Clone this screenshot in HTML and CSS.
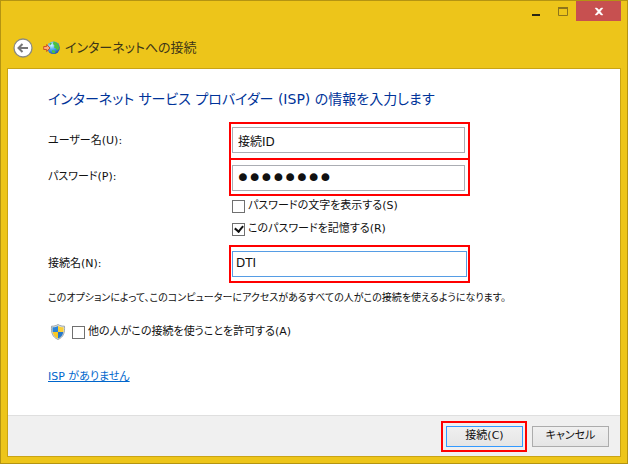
FILE: index.html
```html
<!DOCTYPE html>
<html lang="ja">
<head>
<meta charset="utf-8">
<title>インターネットへの接続</title>
<link rel="stylesheet" href="styles.css">
</head>
<body>
<div class="window">
  <header>
    <div class="controls">
      <button type="button" class="control" aria-label="最小化"><svg width="12" height="12"><path d="M2 9h8v2H2z" fill="#2b2713"/></svg></button>
      <button type="button" class="control" aria-label="最大化" disabled><svg width="12" height="12"><path d="M1 2h10v2H1z" fill="#8d741b"/><path d="M1.500 3v7.500h9V3" fill="none" stroke="#8d741b"/></svg></button>
      <button type="button" class="control close" aria-label="閉じる"><svg width="12" height="12"><path d="M2 3h2l2 2 2-2h2L7.200 6.500 10 10H8L6 8l-2 2H2l2.800-3.500z" fill="#fff" stroke="#fff" stroke-width=".4"/></svg></button>
    </div>
    <div class="titlebar">
      <button type="button" class="back" aria-label="戻る"><svg width="20" height="20" viewBox="0 0 20 20"><circle cx="10" cy="10" r="9" fill="#fff" stroke="#8b8a82" stroke-width="1.300"/><path d="M15 10H6M9.500 6L5.500 10l4 4" fill="none" stroke="#777" stroke-width="2"/></svg></button>
      <svg class="globe" width="17" height="14" viewBox="0 0 17 14">
        <defs><radialGradient id="sea" cx=".35" cy=".3" r=".8"><stop offset="0" stop-color="#d4f6ff"/><stop offset=".45" stop-color="#4aa8ee"/><stop offset="1" stop-color="#1a45a8"/></radialGradient></defs>
        <circle cx="10.500" cy="6.700" r="6.300" fill="url(#sea)"/>
        <path d="M10.500.6l3 1 2.200 2.800.5 3-1.700 2-1.500-2-2-1 .5-2-1.500-1.500zM6 3l2-1.500.8 1.200L7.500 4zM9 9l2.500.5 1 1.500-1.500 1.500-2-1z" fill="#4cc23e"/>
        <path d="M.7 5.500h3V3.500L7 7l-3.300 3.500v-2h-3z" fill="#ffae78" stroke="#cc5026"/>
      </svg>
      <span>インターネットへの接続</span>
    </div>
  </header>
  <form class="panel">
    <main>
      <h1>インターネット サービス プロバイダー (ISP) の情報を入力します</h1>
      <div class="row">
        <label for="user">ユーザー名(U):</label>
        <div class="mark"><input class="field" id="user" type="text" value="接続ID"></div>
      </div>
      <div class="row joined">
        <label for="pass">パスワード(P):</label>
        <div class="mark low"><input class="field dots" id="pass" type="password" value="password"></div>
      </div>
      <div class="options">
        <label class="check"><input type="checkbox">パスワードの文字を表示する(S)</label>
        <label class="check"><input type="checkbox" checked>このパスワードを記憶する(R)</label>
      </div>
      <div class="row">
        <label for="name">接続名(N):</label>
        <div class="mark wide"><input class="field active" id="name" type="text" value="DTI"></div>
      </div>
      <p>このオプションによって、このコンピューターにアクセスがあるすべての人がこの接続を使えるようになります。</p>
      <div class="allow">
        <svg width="16" height="16" viewBox="0 0 16 16">
          <path d="M8 .5c2 1.300 4 1.700 6.500 1.700.4 6.500-.8 10.800-6.500 13.300C2.300 13 1.100 8.700 1.500 2.200 4 2.200 6 1.800 8 .5z" fill="#dde2e3" stroke="#8a9499" stroke-width=".8"/>
          <path d="M8 1.900V8H2.700c-.2-1.500-.3-3-.2-4.700C5 3.200 6.500 2.800 8 1.900z" fill="#2c84d6"/>
          <path d="M8 1.900V8h5.300c.2-1.500.3-3 .2-4.700C11 3.200 9.500 2.800 8 1.900z" fill="#fbd034"/>
          <path d="M8 8H2.700c.5 3.300 2.200 5.200 5.300 6.600z" fill="#fbc926"/>
          <path d="M8 8h5.300c-.5 3.300-2.200 5.200-5.300 6.600z" fill="#2878c8"/>
        </svg>
        <label class="check"><input type="checkbox">他の人がこの接続を使うことを許可する(A)</label>
      </div>
      <a href="#isp">ISP がありません</a>
    </main>
    <footer>
      <div class="mark action"><button type="button" class="push default">接続(C)</button></div>
      <button type="button" class="push">キャンセル</button>
    </footer>
  </form>
</div>
</body>
</html>
```
FILE: styles.css
```css
* {
  box-sizing: border-box;
}

body {
  margin: 0;
  color: #111;
  font: 11px/16px "DejaVu Sans", "Noto Sans CJK JP", sans-serif;
  font-feature-settings: "palt";
}

input,
button {
  margin: 0;
  padding: 0;
  color: inherit;
  font: inherit;
  font-feature-settings: inherit;
}

svg {
  display: block;
  flex: none;
}

.window {
  display: flex;
  flex-direction: column;
  min-height: 100vh;
  padding: 0 6px 6px;
  border: 1px solid #b49412;
  background: #edc51a;
}

.controls {
  display: flex;
  justify-content: flex-end;
}

.control {
  display: flex;
  align-items: center;
  justify-content: center;
  width: 27px;
  height: 20px;
  border: 0;
  background: none;
}

.close {
  width: 45px;
  background: #c75050;
}

.titlebar {
  display: flex;
  align-items: center;
  height: 47px;
  padding: 6px 6px 0;
  color: #3d3618;
  font-size: 13px;
}

.back {
  border: 0;
  background: none;
}

.globe {
  margin: 0 5px 0 10px;
}

.panel {
  display: flex;
  flex: 1;
  flex-direction: column;
  border: 1px solid #c9a414;
  background: #fff;
}

main {
  flex: 1;
  padding: 18px 40px 0;
}

h1 {
  margin: 0 0 11px;
  color: #003399;
  font-size: 14px;
  font-weight: 400;
  line-height: 24px;
}

.row {
  display: grid;
  grid-template-columns: 181px minmax(0, 241px);
  align-items: center;
}

.mark {
  padding: 3px 3px 5px 1px;
  border: 2px solid #ff0000;
}

.joined {
  margin-top: -2px;
}

.low {
  padding: 5px 3px 3px 1px;
}

.wide {
  padding: 4px 1px 4px 1px;
}

.field {
  display: block;
  width: 100%;
  height: 26px;
  padding: 0 5px;
  border: 1px solid #abadb3;
  border-radius: 0;
  outline: 0;
  background: #fff;
  font-size: 12px;
}

.dots {
  padding: 0 4px 2px;
  font-size: 20px;
  -webkit-text-stroke: 2px #111;
}

.active {
  padding: 0 3px 3px;
  border-color: #569de5;
}

.options {
  display: grid;
  gap: 7px;
  margin: 2px 0 8px 184px;
}

.check {
  display: flex;
  align-items: center;
  gap: 3px;
}

.check input {
  display: grid;
  place-items: center;
  width: 13px;
  height: 13px;
  border: 1px solid #707070;
  background: #fff;
  appearance: none;
}

.check input:checked::after {
  box-sizing: content-box;
  width: 4px;
  height: 6px;
  margin-top: -2px;
  border: solid #111;
  border-width: 0 2px 2px 0;
  content: "";
  transform: rotate(40deg);
}

p {
  margin: 7px 0 18px;
  font-size: 10px;
}

.allow {
  display: flex;
  gap: 6px;
  margin: 0 2px 29px;
}

a {
  color: #0066cc;
}

footer {
  display: flex;
  align-items: center;
  justify-content: flex-end;
  gap: 5px;
  height: 41px;
  padding: 0 11px;
  border-top: 1px solid #dfdfdf;
  background: #f0f0f0;
}

.action {
  padding: 3px 2px 3px 3px;
}

.push {
  display: block;
  width: 77px;
  height: 21px;
  border: 1px solid #acacac;
  background: linear-gradient(#f0f0f0, #e5e5e5);
}

.default {
  border-color: #3399ff;
}
```
